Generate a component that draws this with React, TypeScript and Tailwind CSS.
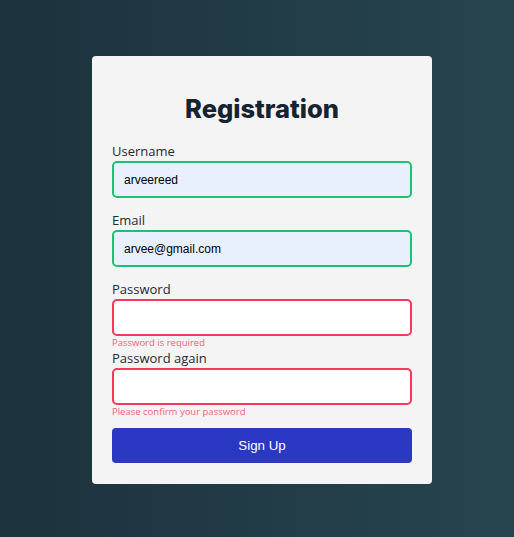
import React from "react";

const labelCls = "block text-[13px] leading-[19px] text-[#1f2a33] font-['Open_Sans',sans-serif]";
const inputBase =
  "w-full h-[37px] rounded-[5px] border-2 px-[10px] text-[12px] text-black outline-none font-['Liberation_Sans',Arial,sans-serif]";

export default function App() {
  return (
    <div className="w-[514px] h-[537px] bg-[linear-gradient(to_right,#1c323d,#27454f)] flex justify-center pl-[10px] pt-[56px]">
      <div className="w-[340px] h-[428px] bg-[#f4f4f4] rounded-[4px] px-[20px] pt-[37px] flex flex-col">
        <h1 className="text-center text-[25.5px] leading-[32px] font-extrabold text-[#162330] font-['Inter',sans-serif] mb-[17px]">
          Registration
        </h1>
        <label className={labelCls}>Username</label>
        <input
          readOnly
          value="arveereed"
          className={inputBase + " border-[#1ec173] bg-[#e8f0fe]"}
        />
        <label className={labelCls + " mt-[13px]"}>Email</label>
        <input
          readOnly
          value="arvee@gmail.com"
          className={inputBase + " border-[#1ec173] bg-[#e8f0fe]"}
        />
        <label className={labelCls + " mt-[13px]"}>Password</label>
        <input readOnly type="password" value="" className={inputBase + " border-[#f7375c] bg-white"} />
        <div className="text-[9.5px] leading-[13px] text-[#f6607a] font-['Open_Sans',sans-serif]">Password is required</div>
        <label className={labelCls}>Password again</label>
        <input readOnly type="password" value="" className={inputBase + " border-[#f7375c] bg-white"} />
        <div className="text-[9.5px] leading-[13px] text-[#f6607a] font-['Open_Sans',sans-serif]">Please confirm your password</div>
        <button className="mt-[10px] h-[35px] w-full rounded-[4px] bg-[#2b38c3] text-white text-[13.33px] leading-[35px] font-['Liberation_Sans',Arial,sans-serif]">
          Sign Up
        </button>
      </div>
    </div>
  );
}
